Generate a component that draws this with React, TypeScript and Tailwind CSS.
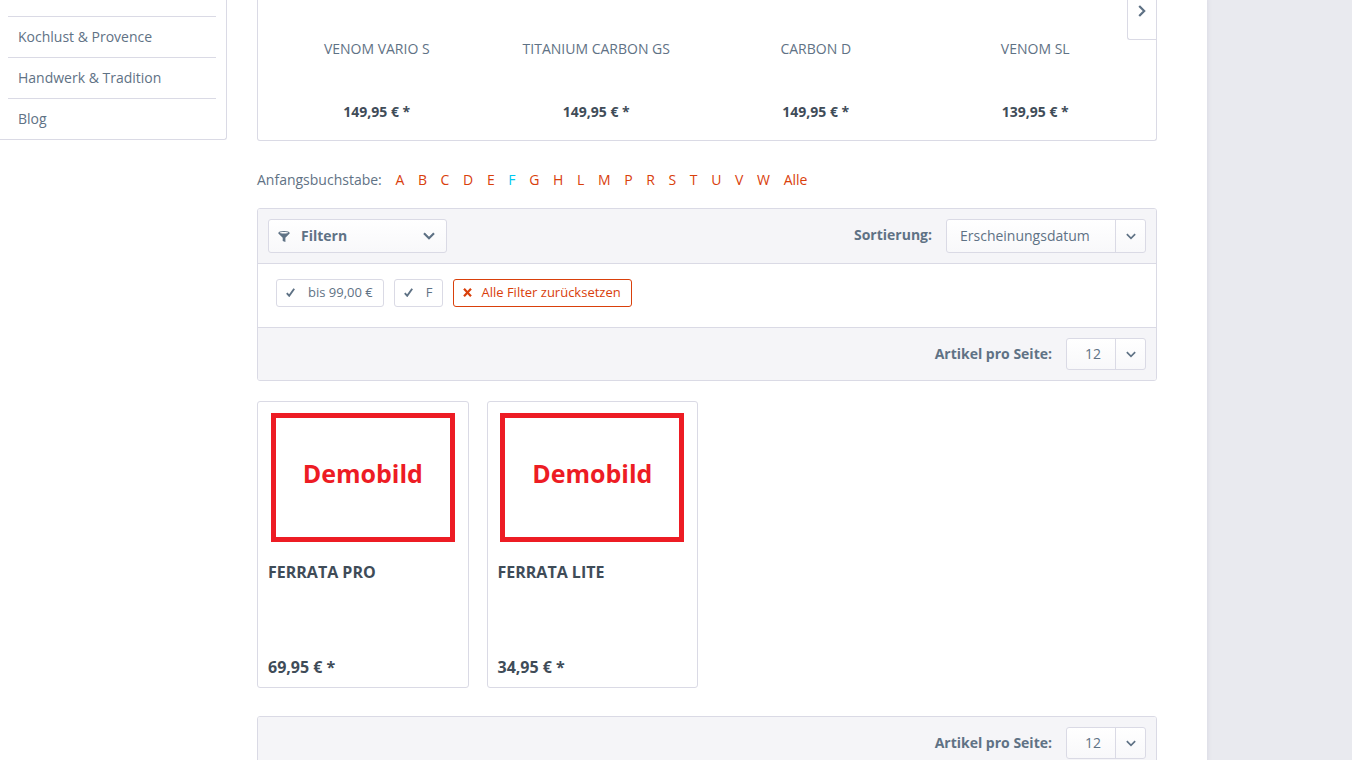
import { useState } from "react";

const categories = ["Kochlust & Provence", "Handwerk & Tradition", "Blog"];

const sliderProducts = [
  { name: "VENOM VARIO S", price: "149,95 € *" },
  { name: "TITANIUM CARBON GS", price: "149,95 € *" },
  { name: "CARBON D", price: "149,95 € *" },
  { name: "VENOM SL", price: "139,95 € *" },
];

const letters = "A B C D E F G H L M P R S T U V W Alle".split(" ");

const products = [
  { name: "FERRATA PRO", price: "69,95 € *" },
  { name: "FERRATA LITE", price: "34,95 € *" },
];

const Chevron = ({ className = "", bold = false }) => (
  <svg className={className} viewBox="0 0 12 8" fill="none" stroke="currentColor" strokeWidth={bold ? 2.2 : 2}>
    <path d="M1 1.2 6 6.2 11 1.2" />
  </svg>
);

const CheckIcon = () => (
  <svg className="h-[9px] w-[9px]" viewBox="0 0 9 9" fill="none" stroke="currentColor" strokeWidth="1.9">
    <path d="M.8 5.2 3.2 7.8 8.2.8" />
  </svg>
);

const CrossIcon = () => (
  <svg className="h-[9px] w-[9px]" viewBox="0 0 9 9" fill="none" stroke="currentColor" strokeWidth="2.2">
    <path d="M1 .8 8 8.2M8 .8 1 8.2" />
  </svg>
);

const FilterIcon = () => (
  <svg className="mt-px h-[11px] w-3" viewBox="0 0 12 11" fill="currentColor">
    <path
      fillRule="evenodd"
      d="M6 0C9.400 0 11.700.7 11.700 2c0 .5-.3.9-.8 1.300L7.400 6.800V11L4.700 10V6.800L1.100 3.300C.6 2.900.3 2.500.3 2 .3.7 2.600 0 6 0ZM6 .9C3.500.9 1.700 1.200 1.700 1.700S3.500 2.500 6 2.500s4.300-.3 4.300-.8S8.500.9 6 .9Z"
    />
  </svg>
);

const PerPage = ({ id }: { id: string }) => (
  <div className="flex items-center justify-end bg-[#f5f5f8] p-[10px]">
    <label htmlFor={id} className="mr-[14px] font-bold">
      Artikel pro Seite:
    </label>
    <div className="relative">
      <select
        id={id}
        className="block h-8 w-20 appearance-none rounded-[3px] border border-[#dadae5] bg-linear-to-b from-white to-[#f8f8fa] pl-[18px]"
      >
        <option>12</option>
        <option>24</option>
        <option>48</option>
      </select>
      <SelectArrow />
    </div>
  </div>
);

const SelectArrow = () => (
  <span className="pointer-events-none absolute inset-y-px right-px flex w-[30px] items-center justify-center border-l border-[#dadae5]">
    <Chevron className="h-[7px] w-[10px]" />
  </span>
);

const App = () => {
  const [letter, setLetter] = useState("F");

  return (
    <div className="h-screen overflow-hidden bg-[#e9eaef] font-['Open_Sans',sans-serif] text-sm text-[#5f7285]">
      <div className="mr-[145px] flex min-h-full items-start bg-white shadow-[0_0_4px_1px_#dadae5]">
        <aside className="w-[227px] shrink-0 rounded-br-[3px] border-r border-b border-[#dadae5] pt-4 pr-[10px] pl-2">
          <ul>
            {categories.map((name) => (
              <li key={name} className="border-t border-[#dadae5]">
                <a href="#" className="block px-[10px] leading-10">
                  {name}
                </a>
              </li>
            ))}
          </ul>
        </aside>

        <main className="mr-[50px] ml-[30px] min-w-0 flex-1">
          <section className="relative grid grid-cols-4 rounded-b-[3px] border-x border-b border-[#dadae5] pr-[11px] pl-[9px] pt-[37px] pb-[16px] text-center">
            {sliderProducts.map((product) => (
              <div key={product.name}>
                <a href="#" className="block h-[63px] leading-6">
                  {product.name}
                </a>
                <p className="leading-6 font-bold text-[#3f4c58]">{product.price}</p>
              </div>
            ))}
            <button
              aria-label="Weiter"
              className="absolute top-0 right-0 flex h-10 w-[29px] justify-center rounded-bl-[3px] border-b border-l border-[#dadae5] bg-white pt-[7px]"
            >
              <Chevron className="h-[8px] w-3 -rotate-90" bold />
            </button>
          </section>

          <nav className="mt-[26px] mb-[15px] leading-[26px]">
            Anfangsbuchstabe:
            {letters.map((l) => (
              <span key={l}>
                {" "}
                <a
                  href="#"
                  onClick={() => setLetter(l)}
                  className={l === letter ? "ml-[10px] text-[#00c8f0]" : "ml-[10px] text-[#d9400b]"}
                >
                  {l}
                </a>
              </span>
            ))}
          </nav>

          <section className="overflow-hidden rounded-[3px] border border-[#dadae5]">
            <div className="flex items-center justify-between bg-[#f5f5f8] p-[10px]">
              <button className="flex h-[34px] w-[179px] items-center rounded-[3px] border border-[#dadae5] bg-linear-to-b from-white to-[#f8f8fa] pr-[11px] pl-[9px] font-bold">
                <FilterIcon />
                <span className="ml-[11px] flex-1 text-left">Filtern</span>
                <Chevron className="h-[8px] w-3" bold />
              </button>
              <div className="flex items-center">
                <label htmlFor="sort" className="mr-[14px] pb-0.5 font-bold">
                  Sortierung:
                </label>
                <div className="relative">
                  <select
                    id="sort"
                    className="block h-[34px] w-[200px] appearance-none rounded-[3px] border border-[#dadae5] bg-linear-to-b from-white to-[#f8f8fa] pl-[13px]"
                  >
                    <option>Erscheinungsdatum</option>
                    <option>Beliebtheit</option>
                    <option>Artikelbezeichnung</option>
                  </select>
                  <SelectArrow />
                </div>
              </div>
            </div>

            <div className="flex gap-[10px] border-y border-[#dadae5] px-[18px] pt-[15px] pb-5 text-[13px]">
              {["bis 99,00 €", "F"].map((filter) => (
                <button
                  key={filter}
                  className="flex h-7 items-center gap-[13px] rounded-[3px] border border-[#dadae5] pr-[10px] pb-0.5 pl-[9px]"
                >
                  <CheckIcon />
                  {filter}
                </button>
              ))}
              <button className="flex h-7 items-center gap-[9px] rounded-[3px] border border-[#d9400b] pr-[10px] pb-0.5 pl-[9px] text-[#d9400b]">
                <CrossIcon />
                Alle Filter zurücksetzen
              </button>
            </div>

            <PerPage id="per-page-top" />
          </section>

          <div className="mt-5 mb-7 grid grid-cols-4 gap-[18px]">
            {products.map((product) => (
              <article
                key={product.name}
                className="rounded-[3px] border border-[#dadae5] px-[10px] pt-[11px] pb-2 text-base leading-6 font-bold text-[#3f4c58]"
              >
                <div className="mx-auto flex h-[129px] max-w-[184px] items-center justify-center border-5 border-[#ed1c24] text-[25px] text-[#ed1c24]">
                  <span className="pb-[10px]">Demobild</span>
                </div>
                <a href="#" className="mt-[18px] block h-[95px]">
                  {product.name}
                </a>
                <p>{product.price}</p>
              </article>
            ))}
          </div>

          <section className="overflow-hidden rounded-[3px] border border-[#dadae5]">
            <PerPage id="per-page-bottom" />
          </section>
        </main>
      </div>
    </div>
  );
};

export default App;
